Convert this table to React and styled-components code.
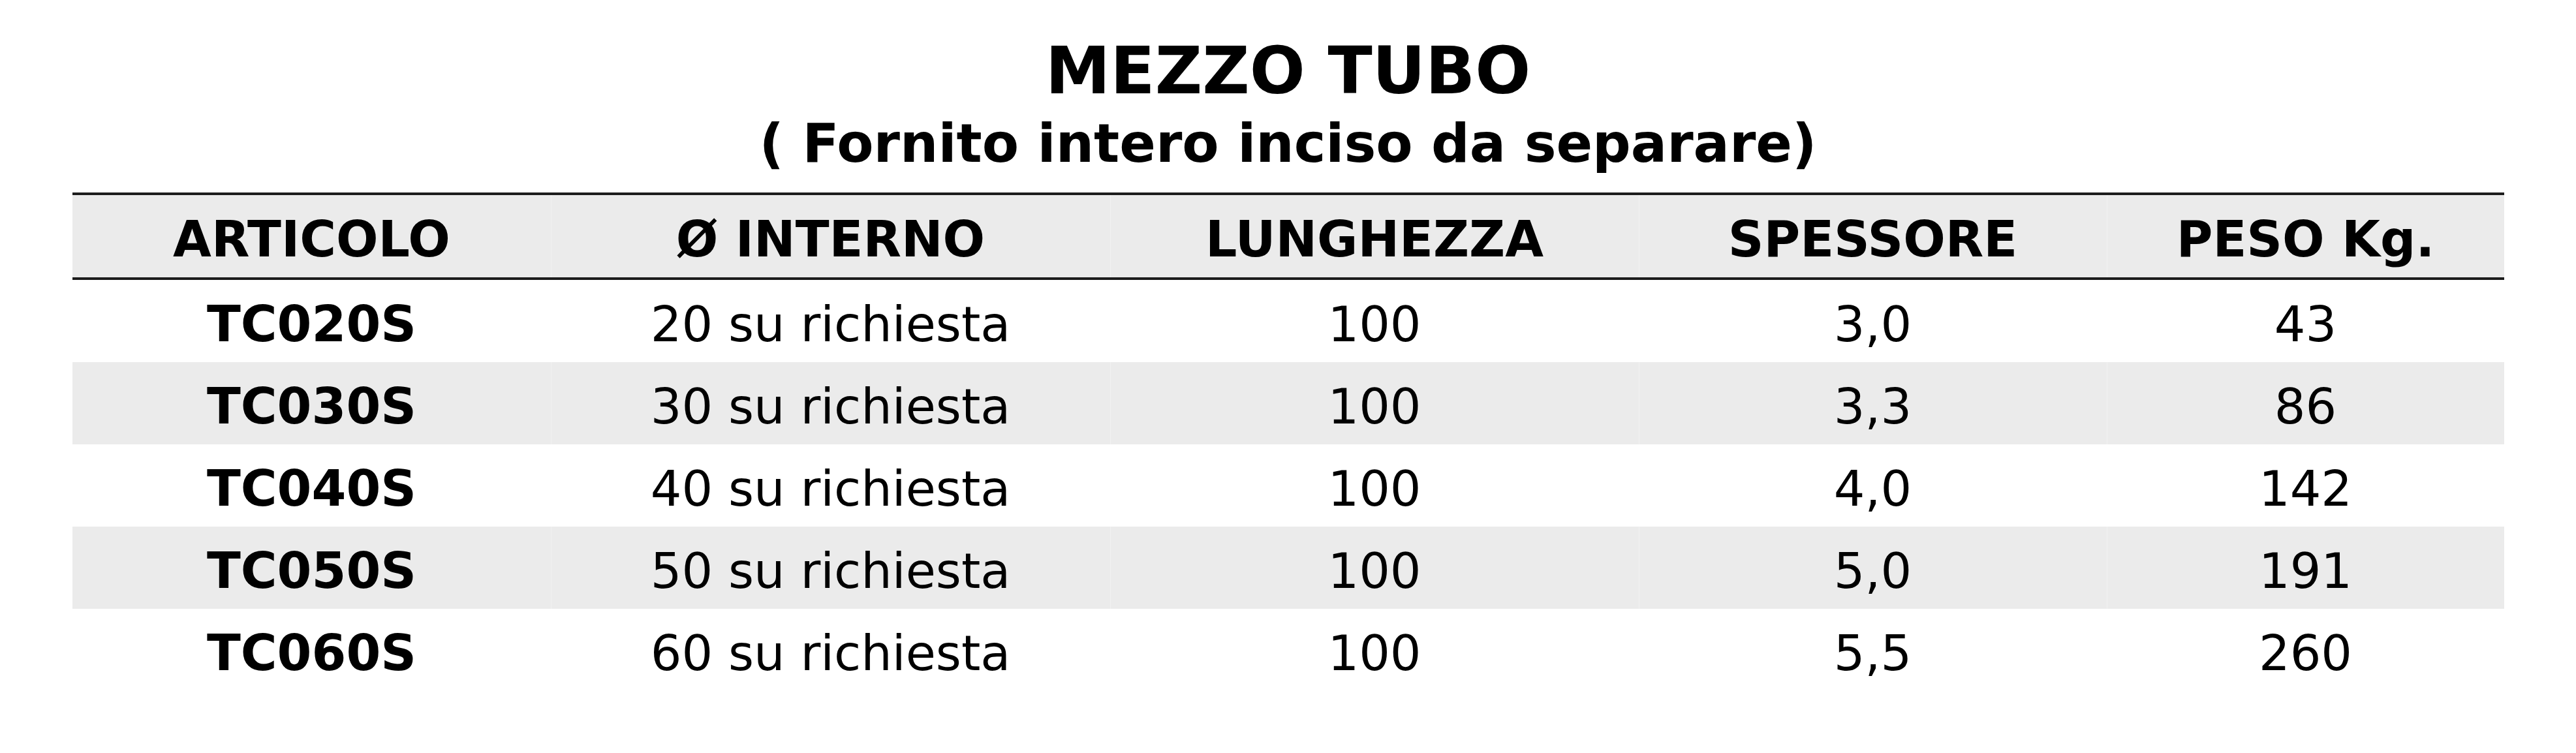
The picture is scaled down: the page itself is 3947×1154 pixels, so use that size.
import React from "react";
import styled, { createGlobalStyle } from "styled-components";

const GlobalStyle = createGlobalStyle`
  html, body {
    margin: 0;
    padding: 0;
    background: #ffffff;
  }
  body {
    font-family: "DejaVu Sans", Verdana, sans-serif;
    color: #000000;
  }
`;

const Page = styled.div`
  width: 3947px;
  min-height: 1154px;
  padding-top: 59px;
  box-sizing: border-box;
  display: flex;
  flex-direction: column;
  align-items: center;
`;

const Title = styled.h1`
  margin: 0;
  font-family: "DejaVu Sans", Verdana, sans-serif;
  font-weight: bold;
  font-size: 100px;
  line-height: 100px;
  text-align: center;
`;

const Subtitle = styled.h2`
  margin: 20px 0 0;
  font-family: "DejaVu Sans", Verdana, sans-serif;
  font-weight: bold;
  font-size: 82px;
  line-height: 82px;
  text-align: center;
`;

const Table = styled.div`
  margin-top: 34px;
  width: 3726px;
  display: flex;
  flex-direction: column;
`;

const COLS = "733px 857px 810px 717px 609px";

const Row = styled.div`
  display: grid;
  grid-template-columns: ${COLS};
  height: 126px;
  background: ${(p) => (p.$shaded ? "#ebebeb" : "#ffffff")};
  ${(p) =>
    p.$header
      ? `
    border-top: 4px solid #1c1c1c;
    border-bottom: 4px solid #1c1c1c;
  `
      : ""}
`;

const Cell = styled.div`
  box-sizing: border-box;
  padding-top: 10px;
  line-height: 116px;
  text-align: center;
  white-space: nowrap;
  font-size: ${(p) => (p.$bold ? "76px" : "75px")};
  font-weight: ${(p) => (p.$bold ? "bold" : "normal")};
  border-left: 1px solid
    ${(p) => (p.$first ? "transparent" : p.$shaded ? "#f1f1f1" : "#ffffff")};
`;

const header = ["ARTICOLO", "Ø INTERNO", "LUNGHEZZA", "SPESSORE", "PESO Kg."];

const rows = [
  ["TC020S", "20 su richiesta", "100", "3,0", "43"],
  ["TC030S", "30 su richiesta", "100", "3,3", "86"],
  ["TC040S", "40 su richiesta", "100", "4,0", "142"],
  ["TC050S", "50 su richiesta", "100", "5,0", "191"],
  ["TC060S", "60 su richiesta", "100", "5,5", "260"],
];

export default function App() {
  return (
    <>
      <GlobalStyle />
      <Page>
        <Title>MEZZO TUBO</Title>
        <Subtitle>( Fornito intero inciso da separare)</Subtitle>
        <Table>
          <Row $header $shaded>
            {header.map((h, i) => (
              <Cell key={h} $bold $shaded $first={i === 0}>
                {h}
              </Cell>
            ))}
          </Row>
          {rows.map((r, ri) => {
            const shaded = ri % 2 === 1;
            return (
              <Row key={r[0]} $shaded={shaded}>
                {r.map((c, ci) => (
                  <Cell key={ci} $bold={ci === 0} $shaded={shaded} $first={ci === 0}>
                    {c}
                  </Cell>
                ))}
              </Row>
            );
          })}
        </Table>
      </Page>
    </>
  );
}
